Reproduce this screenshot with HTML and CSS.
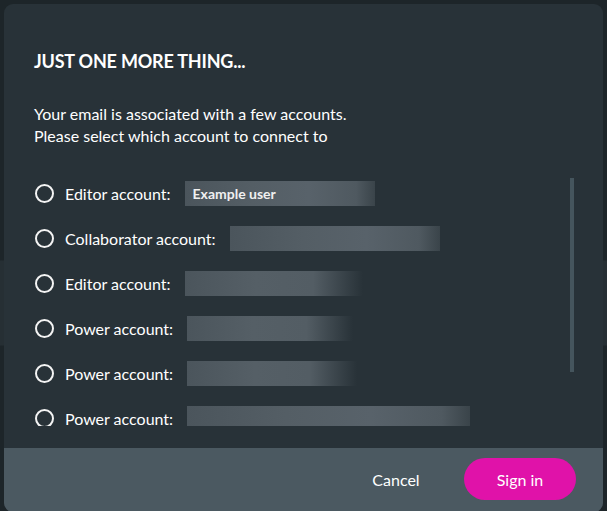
FILE: index.html
```html
<!DOCTYPE html>
<html lang="en">
<head>
<meta charset="utf-8">
<title>Just one more thing</title>
<link rel="stylesheet" href="styles.css">
</head>
<body>
<div class="backdrop">
  <div class="dialog">
    <div class="content">
      <h1 class="title">JUST ONE MORE THING...</h1>
      <p class="intro">Your email is associated with a few accounts.<br>Please select which account to connect to</p>
      <div class="list-wrap">
        <ul class="list">
          <li class="row"><span class="radio"></span><span class="label">Editor account:</span><span class="redact" style="width:190px">Example user</span></li>
          <li class="row"><span class="radio"></span><span class="label">Collaborator account:</span><span class="redact" style="width:210px"></span></li>
          <li class="row"><span class="radio"></span><span class="label">Editor account:</span><span class="redact fade" style="width:178px"></span></li>
          <li class="row"><span class="radio"></span><span class="label">Power account:</span><span class="redact fade" style="width:166px"></span></li>
          <li class="row"><span class="radio"></span><span class="label">Power account:</span><span class="redact fade" style="width:170px"></span></li>
          <li class="row"><span class="radio"></span><span class="label">Power account:</span><span class="redact" style="width:283px"></span></li>
        </ul>
        <div class="scrollbar"><div class="thumb"></div></div>
      </div>
    </div>
    <div class="footer">
      <button class="btn btn-cancel">Cancel</button>
      <button class="btn btn-primary">Sign in</button>
    </div>
  </div>
</div>
</body>
</html>
```

FILE: styles.css
```css
* { box-sizing: border-box; }

html, body {
  margin: 0;
  padding: 0;
  height: 100%;
}

body {
  font-family: Lato, "Noto Sans", sans-serif;
  color: #ffffff;
  background: linear-gradient(180deg, #1d2529 0, #1d2529 260px, #262f34 261px, #262f34 345px, #1d2529 346px, #1d2529 100%);
  overflow: hidden;
}

.backdrop {
  padding: 4px 4px 0 4px;
}

.dialog {
  width: 599px;
  height: 508px;
  background: #283238;
  border-radius: 9px;
  overflow: hidden;
  display: flex;
  flex-direction: column;
}

.content {
  flex: 1;
  padding: 46px 29px 22px 30px;
  display: flex;
  flex-direction: column;
  min-height: 0;
}

.title {
  margin: 0;
  font-size: 18px;
  line-height: 22px;
  font-weight: 700;
  letter-spacing: -0.2px;
}

.intro {
  margin: 31px 0 0 0;
  font-size: 16px;
  line-height: 22px;
  font-weight: 400;
}

.list-wrap {
  margin-top: 24px;
  flex: 1;
  min-height: 0;
  display: flex;
}

.list {
  flex: 1;
  list-style: none;
  margin: 0;
  padding: 0;
  overflow: hidden;
}

.row {
  height: 45px;
  display: flex;
  align-items: center;
  font-size: 16px;
}

.radio {
  width: 19px;
  height: 19px;
  border: 2px solid #f4f4f4;
  border-radius: 50%;
  margin-left: 1px;
  margin-right: 11px;
  flex-shrink: 0;
}

.label {
  white-space: nowrap;
  line-height: 14px;
}

.redact {
  height: 25px;
  margin-left: 14px;
  background: linear-gradient(90deg, #4b555c 0%, #545e65 35%, #58626a 65%, #4f5960 90%, #3a444a 100%);
  font-size: 14px;
  font-weight: 700;
  line-height: 25px;
  padding-left: 8px;
  color: #f0f0f0;
}

.redact.fade {
  background: linear-gradient(90deg, #4b555c 0%, #555f66 40%, #535d64 72%, rgba(40,50,56,0) 100%);
}

.scrollbar {
  width: 4px;
  padding-top: 7px;
}

.thumb {
  width: 4px;
  height: 194px;
  background: #45555d;
}

.footer {
  height: 64px;
  flex-shrink: 0;
  background: #4b5961;
  display: flex;
  justify-content: flex-end;
  align-items: center;
  gap: 12px;
  padding: 0 27px 2px 0;
}

.btn {
  font-family: Lato, "Noto Sans", sans-serif;
  font-size: 16px;
  height: 42px;
  width: 112px;
  border: none;
  border-radius: 21px;
  color: #ffffff;
  background: transparent;
  cursor: pointer;
}

.btn-primary {
  background: #e012a9;
}
```
